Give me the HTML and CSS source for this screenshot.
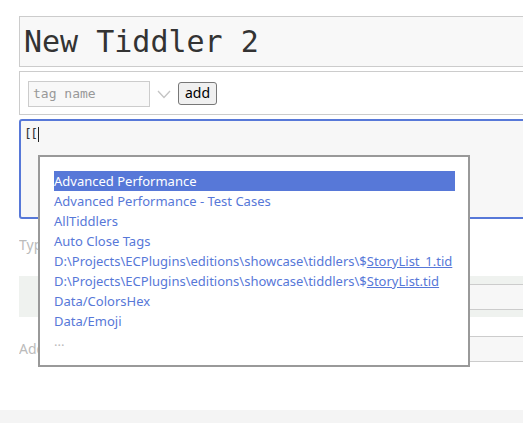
FILE: index.html
```html
<!DOCTYPE html>
<html>
<head>
<meta charset="utf-8">
<link rel="stylesheet" href="styles.css">
</head>
<body>
<div class="page">
  <div class="title-box">New Tiddler 2</div>
  <div class="tag-box">
    <div class="tag-input">tag name</div>
    <svg class="chevron" width="14" height="9" viewBox="0 0 14 9"><path d="M1 1 L7 7.5 L13 1" fill="none" stroke="#c4c4c4" stroke-width="1.3"/></svg>
    <button class="add-btn">add</button>
  </div>
  <div class="editor"><span class="code">[[</span><span class="caret"></span></div>
  <div class="hint first">Type the text for this tiddler</div>
  <div class="fields">
    <div class="field-input"></div>
  </div>
  <div class="add-row">
    <span class="hint">Add a new field:</span>
    <div class="field-input2"></div>
  </div>
  <div class="popup">
    <div class="item selected">Advanced Performance</div>
    <div class="item">Advanced Performance - Test Cases</div>
    <div class="item">AllTiddlers</div>
    <div class="item">Auto Close Tags</div>
    <div class="item">D:\Projects\ECPlugins\editions\showcase\tiddlers\$<u>StoryList_1.tid</u></div>
    <div class="item">D:\Projects\ECPlugins\editions\showcase\tiddlers\$<u>StoryList.tid</u></div>
    <div class="item">Data/ColorsHex</div>
    <div class="item">Data/Emoji</div>
    <div class="item more">...</div>
  </div>
</div>
<div class="footer"></div>
</body>
</html>
```
FILE: styles.css
```css
html, body {
  margin: 0;
  padding: 0;
  background: #fff;
  overflow: hidden;
  width: 523px;
  height: 423px;
}
.page {
  position: relative;
  padding: 16px 0 0 19px;
  width: 620px;
  height: 394px;
  font-family: "Noto Sans", sans-serif;
}
.title-box {
  height: 49px;
  border: 1px solid #ccc;
  background: #f8f8f8;
  font-family: "DejaVu Sans Mono", monospace;
  font-size: 30px;
  color: #333;
  padding-left: 4px;
  display: flex;
  align-items: center;
  line-height: 1;
}
.tag-box {
  margin-top: 4px;
  height: 42px;
  border: 1px solid #ccc;
  background: #fff;
  display: flex;
  align-items: center;
  padding-left: 8px;
}
.tag-input {
  width: 116px;
  height: 24px;
  border: 1px solid #ccc;
  background: #f8f8f8;
  font-family: "DejaVu Sans Mono", monospace;
  font-size: 13px;
  color: #999;
  padding-left: 4px;
  display: flex;
  align-items: center;
  margin-top: 1px;
}
.chevron {
  margin-left: 7px;
  margin-top: 3px;
}
.add-btn {
  margin-left: 7px;
  width: 39px;
  height: 23px;
  border: 1px solid #777;
  border-radius: 3px;
  background: #f0f0f0;
  font-family: "Noto Sans", sans-serif;
  font-size: 14px;
  color: #000;
  padding: 0;
  line-height: 20px;
}
.editor {
  margin-top: 4px;
  border: 2px solid #5778d8;
  border-radius: 3px;
  background: #f7f7f7;
  padding: 4px 3px;
  display: flex;
  align-items: flex-start;
  height: 88px;
}
.code {
  font-family: "DejaVu Sans Mono", monospace;
  font-size: 13px;
  color: #333;
  line-height: 18px;
  letter-spacing: -1.5px;
}
.caret {
  display: inline-block;
  width: 1px;
  height: 15px;
  background: #222;
  margin-top: 2px;
  margin-left: 1px;
}
.hint {
  font-size: 14px;
  color: #bbb;
  width: 19px;
  overflow: hidden;
  white-space: nowrap;
}
.hint.first {
  margin-top: 16px;
  line-height: 20px;
}
.fields {
  margin-top: 21px;
  height: 41px;
  background: #eff2ef;
  display: flex;
  align-items: center;
  justify-content: flex-end;
}
.field-input {
  width: 400px;
  height: 24px;
  border-top: 1px solid #ccc;
  border-bottom: 1px solid #ccc;
  background: #f7f7f7;
}
.add-row {
  margin-top: 18px;
  height: 27px;
  display: flex;
  align-items: center;
  justify-content: space-between;
}
.field-input2 {
  width: 400px;
  height: 24px;
  border-top: 1px solid #ccc;
  border-bottom: 1px solid #ccc;
  background: #f7f7f7;
}
.popup {
  position: absolute;
  left: 38px;
  top: 155px;
  width: 401px;
  padding: 14px 13px 14px 14px;
  border: 2px solid #999;
  background: #fff;
}
.item {
  height: 20px;
  line-height: 20px;
  font-size: 13px;
  color: #5778d8;
  white-space: nowrap;
}
.item.selected {
  background: #5778d8;
  color: #fff;
}
.item u {
  text-decoration: underline;
}
.item.more {
  color: #bbb;
}
.footer {
  height: 13px;
  background: #f4f4f4;
}
```
